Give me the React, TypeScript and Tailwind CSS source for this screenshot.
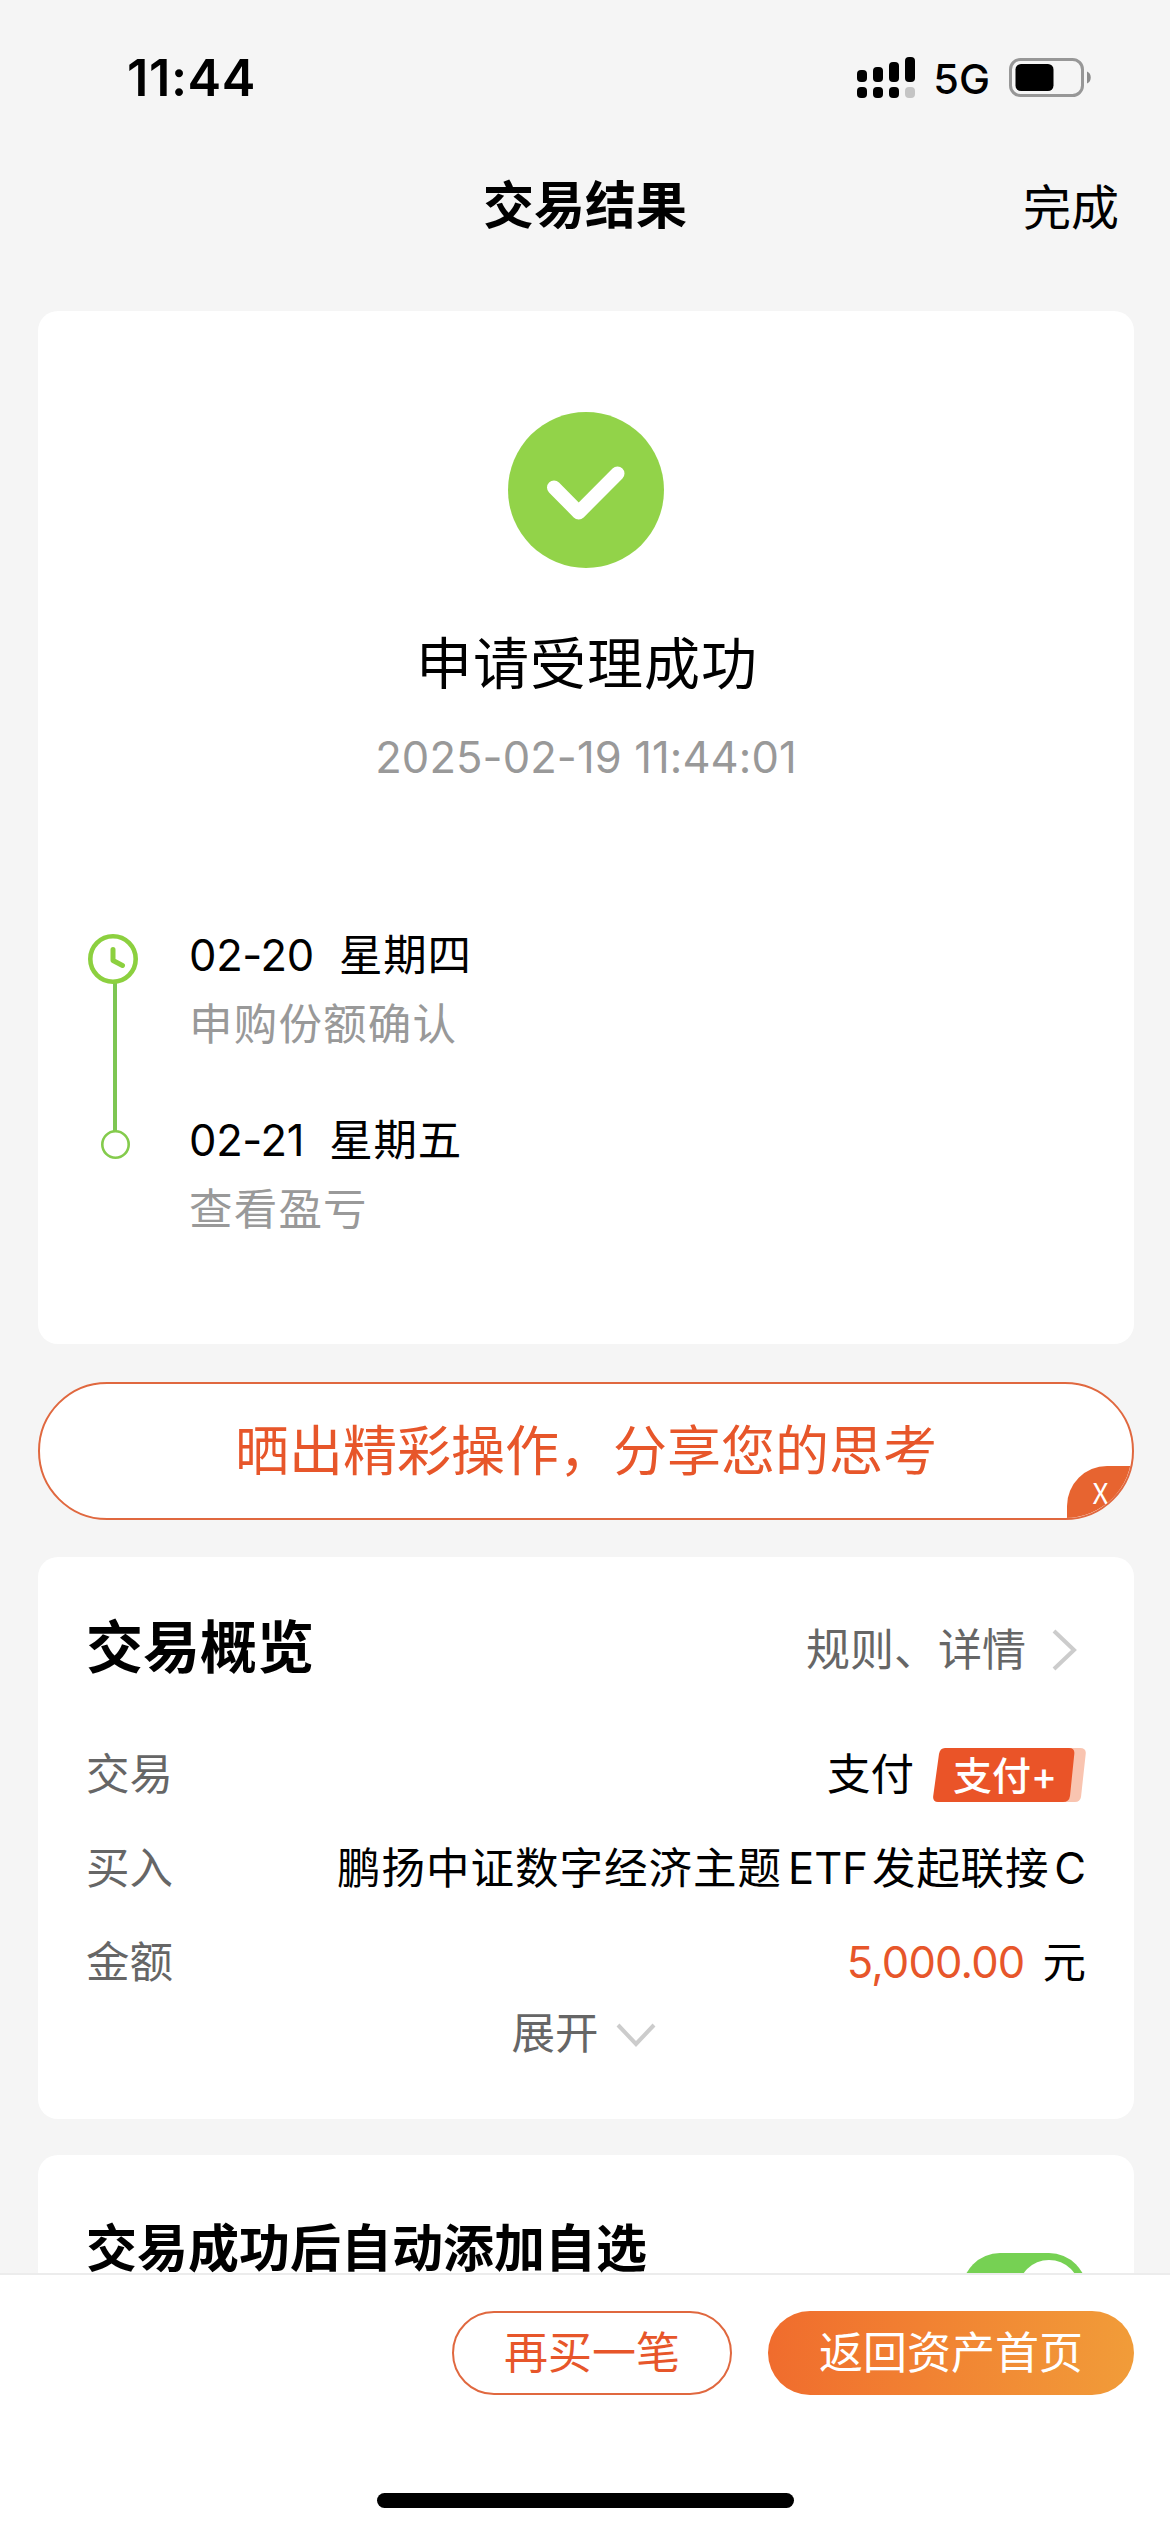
import React from "react";

const SignalIcon = () => (
  <svg width="58" height="41" viewBox="0 0 58 41">
    <rect x="0" y="13" width="10" height="12" rx="4" />
    <rect x="16" y="10" width="10" height="15" rx="4" />
    <rect x="32" y="5" width="10" height="20" rx="4" />
    <rect x="48" y="0" width="10" height="25" rx="4" />
    <rect x="0" y="30" width="10" height="11" rx="4" />
    <rect x="16" y="30" width="10" height="11" rx="4" />
    <rect x="32" y="30" width="10" height="11" rx="4" />
    <rect x="48" y="30" width="10" height="11" rx="4" fill="#c4c4c4" />
  </svg>
);

const BatteryIcon = () => (
  <svg width="83" height="39" viewBox="0 0 83 39">
    <rect x="1.5" y="1.5" width="72" height="36" rx="10" fill="none" stroke="#979797" strokeWidth="3" />
    <rect x="6.5" y="6" width="38" height="27" rx="5.5" />
    <path d="M78 13.5c5 1.500 5 10.500 0 12z" fill="#8c8c8c" />
  </svg>
);

const SuccessIcon = () => (
  <svg width="156" height="156" viewBox="0 0 156 156">
    <circle cx="78" cy="78" r="78" fill="#92d349" />
    <path d="M46 75.500L70.700 100.500L109.500 61.500" fill="none" stroke="#fff" strokeWidth="14" strokeLinecap="round" strokeLinejoin="round" />
  </svg>
);

const TimelineTrack = () => (
  <svg width="50" height="225" viewBox="0 0 50 225" fill="none">
    <path d="M27 48V197" stroke="#7ec653" strokeWidth="4" />
    <circle cx="25" cy="25" r="22.700" stroke="#8cd03f" strokeWidth="4.600" fill="#fff" />
    <path d="M25 15.500V26.500L34.500 31.500" stroke="#8cd03f" strokeWidth="5" strokeLinecap="round" strokeLinejoin="round" />
    <circle cx="27.500" cy="210.500" r="13.200" stroke="#84cb4c" strokeWidth="2.600" fill="#fff" />
  </svg>
);

const PayBadge = () => (
  <div className="relative ml-[19px] h-[54px] w-[153px]">
    <svg className="absolute inset-0" width="153" height="54" viewBox="0 0 153 54">
      <path d="M100 0H147Q153.500 0 152.700 6L148 49Q147 54 142 54H100z" fill="#f9c4b0" />
      <path d="M12 0H136Q142 0 141.300 6L137 48Q136.200 54 130 54H5Q-0.500 54 0.200 48L6 6Q7 0 12 0z" fill="#ea5428" />
    </svg>
    <span className="absolute top-0 left-[20px] text-[39px] leading-[56px] font-medium whitespace-nowrap text-white">支付+</span>
  </div>
);

const Step = ({ date, day, text }: { date: string; day: string; text: string }) => (
  <div className="text-[43.5px] leading-[50px]">
    <div className="flex text-black">
      <span className="tracking-[-0.3px]">{date}</span>
      <span className="ml-[25px] tracking-[0.8px]">{day}</span>
    </div>
    <div className="mt-[19px] tracking-[1.2px] text-[#999]">{text}</div>
  </div>
);

const Row = ({ label, children }: { label: string; children: React.ReactNode }) => (
  <div className="flex h-[94px] items-center justify-between text-[43.5px]">
    <span className="text-[#666]">{label}</span>
    <div className="flex items-center text-black">{children}</div>
  </div>
);

export default function App() {
  return (
    <div className="flex h-[2532px] w-[1170px] flex-col overflow-hidden bg-[#f5f5f5] font-['Inter','Noto_Sans_CJK_SC',sans-serif] text-black">
      <div className="flex h-[155px] shrink-0 items-center justify-between pr-[78px] pl-[127px]">
        <span className="mt-[2px] text-[50.5px] leading-none font-semibold tracking-[0.6px]">11:44</span>
        <div className="flex items-center">
          <SignalIcon />
          <span className="mt-[5px] ml-[18px] text-[41.5px] leading-none font-medium">5G</span>
          <span className="ml-[19px]">
            <BatteryIcon />
          </span>
        </div>
      </div>

      <header className="grid h-[101px] shrink-0 grid-cols-3 items-center">
        <span />
        <h1 className="text-center text-[51px] leading-none font-bold">交易结果</h1>
        <span className="mt-[5px] pr-[51px] text-right text-[48px] leading-none">完成</span>
      </header>

      <main className="flex min-h-0 flex-1 flex-col overflow-hidden px-[38px] pt-[55px]">
        <section className="flex h-[1033px] w-[1096px] shrink-0 flex-col items-center rounded-[20px] bg-white pt-[101px]">
          <SuccessIcon />
          <h2 className="mt-[66px] pl-[2px] text-[56px] leading-[60px] tracking-[1px]">申请受理成功</h2>
          <p className="mt-[38px] text-[43.5px] leading-[50px] tracking-[0.1px] text-[#999]">2025-02-19 11:44:01</p>
          <div className="mt-[148px] flex w-full pl-[50px]">
            <div className="mt-[4px]">
              <TimelineTrack />
            </div>
            <div className="ml-[51px] flex flex-col gap-[66px]">
              <Step date="02-20" day="星期四" text="申购份额确认" />
              <Step date="02-21" day="星期五" text="查看盈亏" />
            </div>
          </div>
        </section>

        <div className="relative mt-[38px] flex h-[138px] w-[1096px] shrink-0 items-center justify-center overflow-hidden rounded-full border-2 border-[#e0683f] bg-white text-[54px] text-[#e7562a]">
          晒出精彩操作，分享您的思考
          <div className="absolute -right-[2px] -bottom-[2px] flex h-[54px] w-[67px] justify-center rounded-tl-[40px] bg-[#e76430] pt-[9px] text-[28px] leading-[34px] text-white">
            <span className="font-['Noto_Sans_CJK_SC']">X</span>
          </div>
        </div>

        <section className="mt-[37px] h-[562px] w-[1096px] shrink-0 rounded-[20px] bg-white px-[48px] pt-[60px]">
          <div className="flex h-[64px] items-center justify-between">
            <h3 className="-mt-[4px] text-[57px] leading-none font-bold">交易概览</h3>
            <div className="mt-[2px] flex items-center text-[44px] text-[#666]">
              规则、详情
              <svg className="mr-[8px] ml-[26px]" width="26" height="42" viewBox="0 0 26 42" fill="none" stroke="#ccc" strokeWidth="4">
                <path d="M2 2L22 21L2 40" />
              </svg>
            </div>
          </div>
          <div className="mt-[47px]">
            <Row label="交易">
              支付
              <PayBadge />
            </Row>
            <Row label="买入">
              <span className="tracking-[1px]">鹏扬中证数字经济主题</span>
              <span className="mr-[4px] ml-[6px]">ETF</span>
              <span className="tracking-[0.8px]">发起联接</span>
              <span className="ml-[5px]">C</span>
            </Row>
            <Row label="金额">
              <span className="tracking-[-0.8px] text-[#e7562a]">5,000.00</span>
              <span className="ml-[18px]">元</span>
            </Row>
          </div>
          <div className="-mt-[2px] flex items-center justify-center pr-[5px] text-[43.5px] leading-[50px] text-[#666]">
            展开
            <svg className="mt-[4px] ml-[17px]" width="40" height="24" viewBox="0 0 40 24" fill="none" stroke="#ccc" strokeWidth="4">
              <path d="M2 2L20 21L38 2" />
            </svg>
          </div>
        </section>

        <section className="mt-[36px] flex h-[240px] w-[1096px] shrink-0 items-start justify-between rounded-t-[20px] bg-white pr-[47px] pl-[48px]">
          <h3 className="mt-[70px] text-[51px] leading-[48px] font-bold">交易成功后自动添加自选</h3>
          <div className="mt-[98px] flex h-[76px] w-[125px] justify-end rounded-full bg-[#76d153] p-[7px]">
            <div className="size-[62px] rounded-full bg-white" />
          </div>
        </section>
      </main>

      <footer className="flex h-[259px] shrink-0 flex-col border-t-2 border-[#ececec] bg-white">
        <div className="mt-[36px] flex justify-end gap-[36px] pr-[36px] text-[44px] leading-[80px]">
          <button className="h-[84px] w-[280px] rounded-full border-2 border-[#e0683f] text-[#e7562a]">再买一笔</button>
          <button className="h-[84px] w-[366px] rounded-full bg-linear-to-r from-[#f06c2d] to-[#f19c39] text-white">返回资产首页</button>
        </div>
        <div className="mt-[98px] ml-[377px] h-[15px] w-[417px] rounded-full bg-black" />
      </footer>
    </div>
  );
}
